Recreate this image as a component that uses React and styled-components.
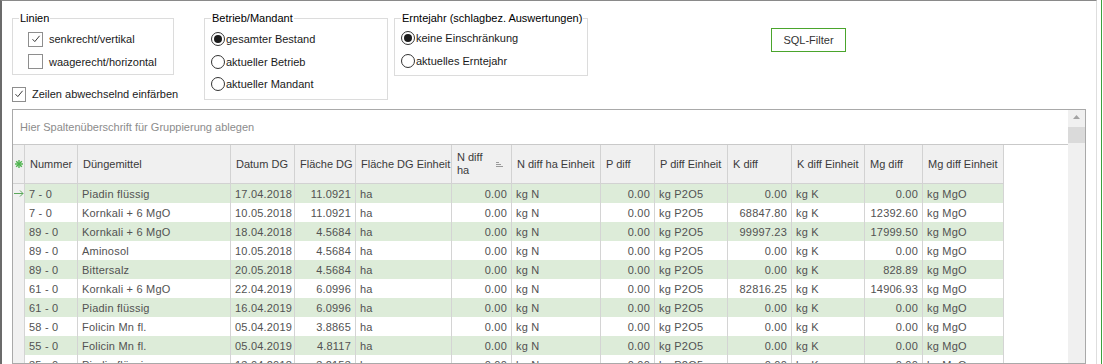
import React from 'react'
import styled, { createGlobalStyle } from 'styled-components'

const GlobalStyle = createGlobalStyle`
  html, body {
    margin: 0;
    padding: 0;
    background: #fff;
    overflow: hidden;
  }
  body {
    font-family: "Liberation Sans", Arial, sans-serif;
    font-size: 11px;
    color: #000;
  }
`

const columns = [
  { key: 'ind', title: '', width: 12 },
  { key: 'nr', title: 'Nummer', width: 53 },
  { key: 'dm', title: 'Düngemittel', width: 153 },
  { key: 'datum', title: 'Datum DG', width: 64 },
  { key: 'flaeche', title: 'Fläche DG', width: 61, right: true },
  { key: 'fe', title: 'Fläche DG Einheit', width: 96 },
  { key: 'n', title: 'N diff ha', width: 60, right: true, sort: true },
  { key: 'ne', title: 'N diff ha Einheit', width: 89 },
  { key: 'p', title: 'P diff', width: 54, right: true },
  { key: 'pe', title: 'P diff Einheit', width: 73 },
  { key: 'k', title: 'K diff', width: 64, right: true },
  { key: 'ke', title: 'K diff Einheit', width: 73 },
  { key: 'mg', title: 'Mg diff', width: 58, right: true },
  { key: 'mge', title: 'Mg diff Einheit', width: 81 },
]

const template = columns.map(c => `${c.width}px`).join(' ')

const rows = [
  ['7 - 0', 'Piadin flüssig', '17.04.2018', '11.0921', '0.00', '0.00'],
  ['7 - 0', 'Kornkali + 6 MgO', '10.05.2018', '11.0921', '68847.80', '12392.60'],
  ['89 - 0', 'Kornkali + 6 MgO', '18.04.2018', '4.5684', '99997.23', '17999.50'],
  ['89 - 0', 'Aminosol', '10.05.2018', '4.5684', '0.00', '0.00'],
  ['89 - 0', 'Bittersalz', '20.05.2018', '4.5684', '0.00', '828.89'],
  ['61 - 0', 'Kornkali + 6 MgO', '22.04.2019', '6.0996', '82816.25', '14906.93'],
  ['61 - 0', 'Piadin flüssig', '16.04.2019', '6.0996', '0.00', '0.00'],
  ['58 - 0', 'Folicin Mn fl.', '05.04.2019', '3.8865', '0.00', '0.00'],
  ['55 - 0', 'Folicin Mn fl.', '05.04.2019', '4.8117', '0.00', '0.00'],
  ['35 - 0', 'Piadin flüssig', '13.04.2018', '3.2153', '0.00', '0.00'],
]

function CheckOption({ checked, label, indent }) {
  return (
    <OptionRow $indent={indent} $gap={6}>
      <CheckBox>
        {checked && (
          <svg width="12" height="12" viewBox="0 0 12 12">
            <polyline points="2.5,6.2 4.8,8.6 9.6,2.8" fill="none" stroke="#3a3a3a" strokeWidth="1" />
          </svg>
        )}
      </CheckBox>
      <span>{label}</span>
    </OptionRow>
  )
}

function RadioOption({ checked, label }) {
  return (
    <OptionRow $gap={1}>
      <Radio>{checked && <RadioDot />}</Radio>
      <span>{label}</span>
    </OptionRow>
  )
}

function NewRowIcon() {
  return (
    <svg width="8" height="8" viewBox="0 0 8 8">
      <g stroke="#4cb34c" strokeWidth="1.4">
        <line x1="4" y1="0" x2="4" y2="8" />
        <line x1="0" y1="4" x2="8" y2="4" />
        <line x1="1.2" y1="1.2" x2="6.8" y2="6.8" />
        <line x1="6.8" y1="1.2" x2="1.2" y2="6.8" />
      </g>
    </svg>
  )
}

function SortIcon() {
  return (
    <svg width="7" height="5" viewBox="0 0 7 5">
      <g stroke="#9a9a9a" strokeWidth="1">
        <line x1="0" y1="0.5" x2="3" y2="0.5" />
        <line x1="0" y1="2.5" x2="5" y2="2.5" />
        <line x1="0" y1="4.5" x2="7" y2="4.5" />
      </g>
    </svg>
  )
}

function RowArrow() {
  return (
    <svg width="10" height="7" viewBox="0 0 10 7">
      <g stroke="#5aa85a" strokeWidth="1" fill="none">
        <line x1="0" y1="3.5" x2="9" y2="3.5" />
        <polyline points="6,0.5 9,3.5 6,6.5" />
      </g>
    </svg>
  )
}

export default function App() {
  return (
    <Page>
      <GlobalStyle />
      <Window>
        <TopArea>
          <LeftCol>
            <GroupBox $width={162} $pad="3px 0 1px 6px">
              <Legend>Linien</Legend>
              <CheckOption checked label="senkrecht/vertikal" indent={9} />
              <CheckOption label="waagerecht/horizontal" indent={9} />
            </GroupBox>
            <ZeilenRow>
              <CheckOption checked label="Zeilen abwechselnd einfärben" />
            </ZeilenRow>
          </LeftCol>

          <GroupBox $width={184} $pad="3px 0 3px 6px" $ml={30}>
            <Legend>Betrieb/Mandant</Legend>
            <RadioOption checked label="gesamter Bestand" />
            <RadioOption label="aktueller Betrieb" />
            <RadioOption label="aktueller Mandant" />
          </GroupBox>

          <GroupBox $width={194} $pad="2px 0 3px 6px" $ml={6}>
            <Legend>Erntejahr (schlagbez. Auswertungen)</Legend>
            <RadioOption checked label="keine Einschränkung" />
            <RadioOption label="aktuelles Erntejahr" />
          </GroupBox>

          <FilterButton>SQL-Filter</FilterButton>
        </TopArea>

        <GridBox>
          <GridMain>
            <GroupPanel>Hier Spaltenüberschrift für Gruppierung ablegen</GroupPanel>
            <HeaderRow>
              {columns.map(c => (
                <HeaderCell key={c.key} $ind={c.key === 'ind'} $sort={c.sort}>
                  {c.key === 'ind' ? <NewRowIcon /> : <HeaderText $narrow={c.sort}>{c.title}</HeaderText>}
                  {c.sort && <SortIcon />}
                </HeaderCell>
              ))}
            </HeaderRow>
            {rows.map((r, i) => {
              const [nr, dm, datum, fl, k, mg] = r
              const values = [
                i === 0 ? <RowArrow /> : null,
                nr, dm, datum, fl, 'ha', '0.00', 'kg N', '0.00', 'kg P2O5', k, 'kg K', mg, 'kg MgO',
              ]
              return (
                <DataRow key={i} $green={i % 2 === 0}>
                  {values.map((v, j) => (
                    <Cell key={j} $right={columns[j].right} $ind={j === 0}>
                      {v}
                    </Cell>
                  ))}
                </DataRow>
              )
            })}
          </GridMain>
          <ScrollBar>
            <ScrollUp>
              <svg width="7" height="4" viewBox="0 0 7 4">
                <polygon points="0,4 3.5,0 7,4" fill="#a3a3a3" />
              </svg>
            </ScrollUp>
            <ScrollThumb />
          </ScrollBar>
        </GridBox>
      </Window>
      <RightStrip />
    </Page>
  )
}

const Page = styled.div`
  display: flex;
  width: 1103px;
  height: 364px;
  overflow: hidden;
`

const Window = styled.div`
  box-sizing: border-box;
  display: flex;
  flex-direction: column;
  width: 1097px;
  height: 364px;
  padding: 0 10px;
  border-left: 2px solid #6b6b6b;
  border-top: 1px solid #8a8a8a;
  border-right: 1px solid #dedede;
`

const RightStrip = styled.div`
  width: 4px;
  height: 364px;
  border-right: 1px solid #3e9f3e;
`

const TopArea = styled.div`
  box-sizing: border-box;
  display: flex;
  align-items: flex-start;
  flex: 0 0 108px;
  padding-top: 11px;
`

const LeftCol = styled.div`
  display: flex;
  flex-direction: column;
  width: 162px;
`

const GroupBox = styled.fieldset`
  box-sizing: border-box;
  width: ${p => p.$width}px;
  min-width: 0;
  margin: 0 0 0 ${p => p.$ml || 0}px;
  padding: ${p => p.$pad};
  border: 1px solid #dcdcdc;
`

const Legend = styled.legend`
  padding: 0 1px;
  line-height: 13px;
  color: #000;
`

const OptionRow = styled.div`
  display: flex;
  align-items: center;
  gap: ${p => p.$gap}px;
  height: 22.5px;
  margin-left: ${p => p.$indent || 0}px;
  color: #1a1a1a;
  white-space: nowrap;
`

const ZeilenRow = styled.div`
  margin-top: 8px;
`

const CheckBox = styled.span`
  box-sizing: border-box;
  display: flex;
  align-items: center;
  justify-content: center;
  width: 15px;
  height: 15px;
  border: 1px solid #8e8e8e;
  background: #fff;
`

const Radio = styled.span`
  box-sizing: border-box;
  display: flex;
  align-items: center;
  justify-content: center;
  width: 14px;
  height: 14px;
  border: 1px solid #333;
  border-radius: 50%;
  background: #fff;
`

const RadioDot = styled.span`
  width: 8px;
  height: 8px;
  border-radius: 50%;
  background: #1c1c1c;
`

const FilterButton = styled.button`
  box-sizing: border-box;
  width: 75px;
  height: 24px;
  margin: 16px 0 0 183px;
  padding: 0;
  border: 1px solid #4aa52c;
  background: #fff;
  font-family: inherit;
  font-size: 11px;
  color: #333;
`

const GridBox = styled.div`
  display: flex;
  flex: 1;
  min-height: 0;
  border: 1px solid #a9a9a9;
  overflow: hidden;
`

const GridMain = styled.div`
  flex: 1;
  display: flex;
  flex-direction: column;
  min-width: 0;
`

const GroupPanel = styled.div`
  box-sizing: border-box;
  flex: 0 0 35px;
  display: flex;
  align-items: center;
  padding: 0 7px 1px;
  border-bottom: 1px solid #c9c9c9;
  color: #8c8c8c;
`

const HeaderRow = styled.div`
  box-sizing: border-box;
  display: grid;
  grid-template-columns: ${template};
  width: max-content;
  height: 39px;
  flex: 0 0 39px;
  border-bottom: 1px solid #d2d2d2;
  background: #f0f0f0;
  color: #3a3a3a;
`

const HeaderCell = styled.div`
  box-sizing: border-box;
  display: flex;
  align-items: center;
  justify-content: ${p => (p.$sort ? 'space-between' : 'flex-start')};
  padding: ${p => (p.$ind ? '0 0 0 2px' : p.$sort ? '0 8px 0 5px' : '0 5px')};
  border-right: 1px solid #d2d2d2;
  overflow: hidden;
`

const HeaderText = styled.span`
  line-height: 13px;
  white-space: ${p => (p.$narrow ? 'normal' : 'nowrap')};
  width: ${p => (p.$narrow ? '32px' : 'auto')};
`

const DataRow = styled.div`
  display: grid;
  grid-template-columns: ${template};
  width: max-content;
  height: 19px;
  flex: 0 0 19px;
  background: ${p => (p.$green ? '#ddecd9' : '#fff')};
  color: #525252;
`

const Cell = styled.div`
  box-sizing: border-box;
  display: flex;
  align-items: center;
  justify-content: ${p => (p.$right ? 'flex-end' : 'flex-start')};
  padding: ${p => (p.$ind ? '0 0 0 1px' : '0 4px')};
  border-right: 1px solid #d4d4d4;
  background: ${p => (p.$ind ? '#f1f1f1' : 'transparent')};
  white-space: nowrap;
  overflow: hidden;
  letter-spacing: 0.2px;
`

const ScrollBar = styled.div`
  display: flex;
  flex-direction: column;
  width: 17px;
  flex: 0 0 17px;
  background: #f0f0f0;
`

const ScrollUp = styled.div`
  display: flex;
  justify-content: center;
  align-items: flex-start;
  height: 17px;
  padding-top: 5px;
  box-sizing: border-box;
`

const ScrollThumb = styled.div`
  height: 16px;
  background: #dadada;
`
